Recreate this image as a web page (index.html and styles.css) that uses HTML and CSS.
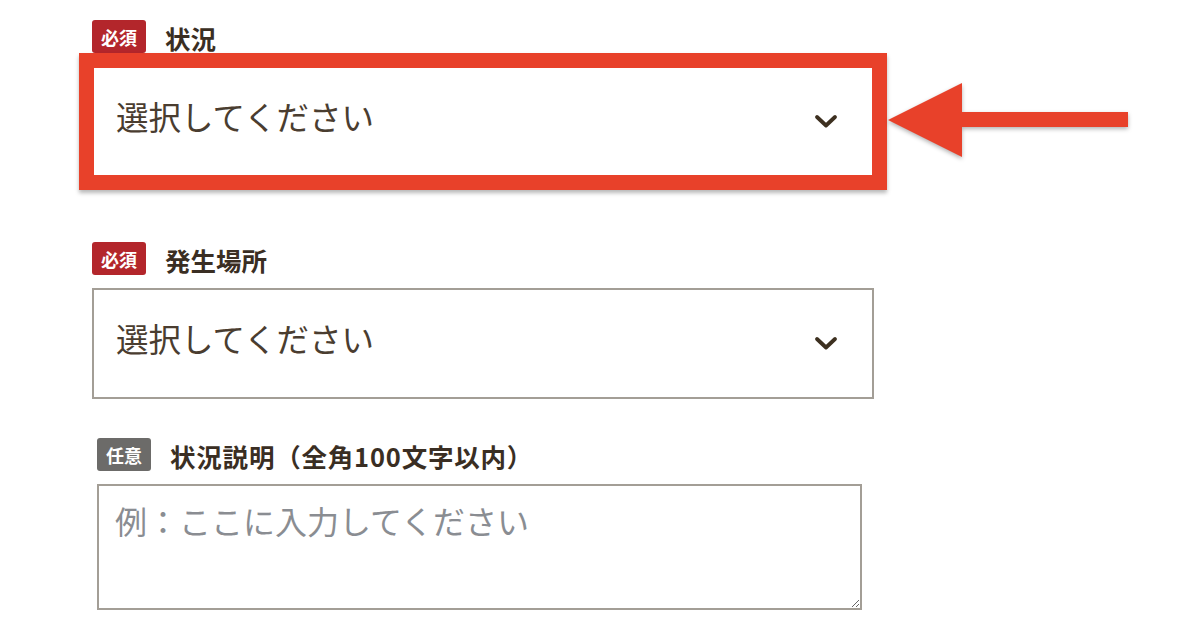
FILE: index.html
```html
<!DOCTYPE html>
<html lang="ja">
<head>
<meta charset="utf-8">
<link rel="stylesheet" href="styles.css">
</head>
<body>
<div class="form">
  <div class="field field-first">
    <div class="label-row">
      <span class="badge badge-req">必須</span>
      <span class="label">状況</span>
    </div>
    <div class="select select-highlight">
      <span class="select-text">選択してください</span>
      <svg class="chevron" width="24" height="16" viewBox="0 0 24 16"><path d="M3 3 L12 11.5 L21 3" fill="none" stroke="#3d3020" stroke-width="3.8" stroke-linecap="round" stroke-linejoin="round"/></svg>
    </div>
  </div>
  <div class="field field-second">
    <div class="label-row">
      <span class="badge badge-req">必須</span>
      <span class="label">発生場所</span>
    </div>
    <div class="select">
      <span class="select-text">選択してください</span>
      <svg class="chevron" width="24" height="16" viewBox="0 0 24 16"><path d="M3 3 L12 11.5 L21 3" fill="none" stroke="#3d3020" stroke-width="3.8" stroke-linecap="round" stroke-linejoin="round"/></svg>
    </div>
  </div>
  <div class="field field-third">
    <div class="label-row">
      <span class="badge badge-opt">任意</span>
      <span class="label label-long">状況説明（全角100文字以内）</span>
    </div>
    <textarea class="textarea" placeholder="例：ここに入力してください"></textarea>
  </div>
</div>
<svg class="arrow" width="260" height="90" viewBox="0 0 260 90">
  <path d="M6 45 L80 8 L80 37 L246 37 L246 52 L80 52 L80 82 Z" fill="#e8412a"/>
</svg>
</body>
</html>
```

FILE: styles.css
```css
html, body {
  margin: 0;
  padding: 0;
  background: #ffffff;
}
body {
  font-family: "Noto Sans CJK JP", "Noto Sans", sans-serif;
  color: #3f3327;
  width: 1192px;
  height: 633px;
  overflow: hidden;
  position: relative;
}
.form {
  padding: 20px 0 0 92px;
}
.field {
  display: flex;
  flex-direction: column;
}
.field-second {
  margin-top: 65px;
}
.field-third {
  margin-top: 39px;
  padding-left: 5px;
}
.label-row {
  display: flex;
  align-items: center;
  gap: 19px;
  height: 33px;
  margin-bottom: 13px;
}
.badge {
  display: inline-flex;
  align-items: center;
  justify-content: center;
  width: 54px;
  height: 33px;
  border-radius: 3px;
  color: #ffffff;
  font-size: 18px;
  font-weight: 700;
  letter-spacing: 0;
}
.badge-req {
  background: #b3262b;
}
.badge-opt {
  background: #6c6b69;
}
.label {
  font-size: 25.5px;
  font-weight: 700;
  color: #3a2e23;
  line-height: 1;
  margin-top: 3px;
}
.label-long {
  letter-spacing: 0.8px;
}
.select {
  box-sizing: border-box;
  width: 782px;
  height: 111px;
  border: 2px solid #a39e96;
  background: #ffffff;
  display: flex;
  align-items: center;
  justify-content: space-between;
  padding: 0 34px 0 22px;
}
.select-highlight {
  border-color: #e8412a;
  box-shadow: 0 0 0 13px #e8412a, 0 3px 4px 13px rgba(0, 0, 0, 0.28);
}
.select-text {
  font-size: 32.5px;
  color: #4a3d30;
  line-height: 1;
  margin-bottom: 10px;
}
.chevron {
  display: block;
}
.textarea {
  box-sizing: border-box;
  width: 765px;
  height: 126px;
  border: 2px solid #a39e96;
  border-radius: 0;
  padding: 12px 16px;
  font-family: "Noto Sans CJK JP", "Noto Sans", sans-serif;
  font-size: 32px;
  line-height: 1.4;
  color: #4a3d30;
  resize: both;
  outline: none;
  margin: 0;
}
.textarea::placeholder {
  color: #8a8d92;
}
.arrow {
  position: absolute;
  left: 882px;
  top: 75px;
  filter: drop-shadow(0 2px 2px rgba(0, 0, 0, 0.3));
}
```
